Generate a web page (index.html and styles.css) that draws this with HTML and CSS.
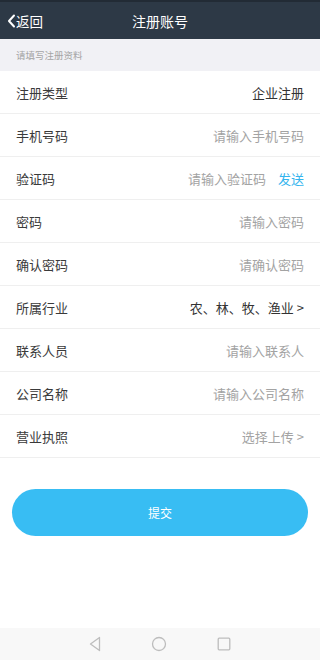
FILE: index.html
```html
<!DOCTYPE html>
<html lang="zh">
<head>
<meta charset="utf-8">
<link rel="stylesheet" href="styles.css">
</head>
<body>
<div class="app">
  <header class="topbar">
    <div class="back">
      <svg class="chev" width="9" height="14" viewBox="0 0 9 14"><path d="M7 1.5 L2 7 L7 12.5" fill="none" stroke="#fff" stroke-width="2" stroke-linecap="round" stroke-linejoin="round"/></svg>
      <span>返回</span>
    </div>
    <div class="title">注册账号</div>
  </header>
  <div class="hint">请填写注册资料</div>
  <ul class="form">
    <li class="row"><span class="label">注册类型</span><span class="value dark">企业注册</span></li>
    <li class="row"><span class="label">手机号码</span><span class="value">请输入手机号码</span></li>
    <li class="row"><span class="label">验证码</span><span class="value">请输入验证码<span class="send">发送</span></span></li>
    <li class="row"><span class="label">密码</span><span class="value">请输入密码</span></li>
    <li class="row"><span class="label">确认密码</span><span class="value">请确认密码</span></li>
    <li class="row"><span class="label">所属行业</span><span class="value dark">农、林、牧、渔业 &gt;</span></li>
    <li class="row"><span class="label">联系人员</span><span class="value">请输入联系人</span></li>
    <li class="row"><span class="label">公司名称</span><span class="value">请输入公司名称</span></li>
    <li class="row"><span class="label">营业执照</span><span class="value">选择上传 &gt;</span></li>
  </ul>
  <div class="submit-wrap"><button class="submit">提交</button></div>
  <div class="spacer"></div>
  <nav class="navbar">
    <svg width="12" height="16" viewBox="0 0 12 16"><path d="M10.5 1.5 L1.5 8 L10.5 14.5 Z" fill="none" stroke="#bdbdbd" stroke-width="1.3" stroke-linejoin="round"/></svg>
    <svg width="16" height="16" viewBox="0 0 16 16"><circle cx="8" cy="8" r="6.5" fill="none" stroke="#bdbdbd" stroke-width="1.3"/></svg>
    <svg width="14" height="14" viewBox="0 0 14 14"><rect x="1.2" y="1.2" width="11.6" height="11.6" rx="1" fill="none" stroke="#bdbdbd" stroke-width="1.3"/></svg>
  </nav>
</div>
</body>
</html>
```
FILE: styles.css
```css
* { box-sizing: border-box; }
html, body { margin: 0; padding: 0; }
body {
  font-family: "Noto Sans CJK SC", "Noto Sans", sans-serif;
  background: #fff;
}
.app {
  width: 320px;
  height: 660px;
  display: flex;
  flex-direction: column;
}
.topbar {
  height: 39px;
  background: #2d3946;
  border-top: 2px solid #222b35;
  color: #fff;
  display: flex;
  align-items: center;
  justify-content: center;
  position: relative;
  flex: none;
}
.back {
  position: absolute;
  left: 7px;
  top: 0;
  bottom: 0;
  display: flex;
  align-items: center;
  gap: 0;
  font-size: 13.5px;
}
.chev { margin-right: 0; }
.title { font-size: 14px; letter-spacing: 0; }
.hint {
  height: 32px;
  background: #f1f1f5;
  color: #a5a5a5;
  font-size: 9.5px;
  display: flex;
  align-items: center;
  padding-left: 16px;
  flex: none;
}
.form {
  list-style: none;
  margin: 0;
  padding: 0;
  flex: none;
}
.row {
  height: 43px;
  display: flex;
  align-items: center;
  justify-content: space-between;
  padding: 0 16px;
  border-bottom: 1px solid #efefef;
  font-size: 13px;
}
.label { color: #3a3a3a; }
.value { color: #a3a3a3; }
.value.dark { color: #333; }
.send { color: #34b4ee; margin-left: 12px; }
.submit-wrap {
  padding: 31px 12px 0;
  flex: none;
}
.submit {
  width: 100%;
  height: 47px;
  border: none;
  border-radius: 24px;
  background: #38bdf3;
  color: #fff;
  font-family: inherit;
  font-size: 12px;
  display: block;
}
.spacer { flex: 1; }
.navbar {
  height: 32px;
  background: #f8f8f8;
  display: flex;
  align-items: center;
  justify-content: center;
  gap: 50px;
  flex: none;
}
```
